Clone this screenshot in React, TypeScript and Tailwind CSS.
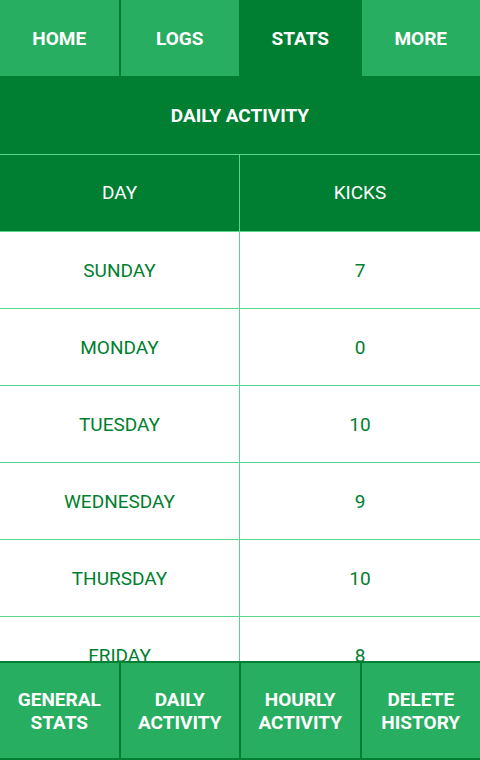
import React from "react";

const font = { fontFamily: "Roboto, 'Noto Sans', sans-serif" };

const tabs = ["HOME", "LOGS", "STATS", "MORE"];
const rows: [string, string][] = [
  ["SUNDAY", "7"],
  ["MONDAY", "0"],
  ["TUESDAY", "10"],
  ["WEDNESDAY", "9"],
  ["THURSDAY", "10"],
  ["FRIDAY", "8"],
  ["SATURDAY", "5"],
];
const actions = [
  ["GENERAL", "STATS"],
  ["DAILY", "ACTIVITY"],
  ["HOURLY", "ACTIVITY"],
  ["DELETE", "HISTORY"],
];

export default function App() {
  return (
    <div className="flex h-[760px] w-[480px] flex-col overflow-hidden bg-white" style={font}>
      {/* top tabs */}
      <div className="flex h-[76px] shrink-0 bg-[#007f32]">
        {tabs.map((t, i) => (
          <div
            key={t}
            className={
              "flex flex-1 items-center justify-center pt-[2px] text-[19px] font-bold text-white " +
              (i > 0 ? "border-l-2 border-[#007f32] " : "") +
              (t === "STATS" ? "bg-[#007f32]" : "bg-[#27ae60]")
            }
          >
            {t}
          </div>
        ))}
      </div>

      <div className="flex h-[79px] shrink-0 items-center justify-center border-b border-[#58d68d] bg-[#007f32] pt-[3px] text-[19px] font-bold text-white">
        DAILY ACTIVITY
      </div>

      <div className="flex-1 overflow-hidden">
        <div className="grid h-[77px] grid-cols-2 border-b border-[#58d68d] bg-[#007f32] text-[19px] text-white">
          <div className="flex items-center justify-center border-r border-[#58d68d] pt-px">DAY</div>
          <div className="flex items-center justify-center pt-px">KICKS</div>
        </div>
        {rows.map(([day, kicks]) => (
          <div key={day} className="grid h-[77px] grid-cols-2 border-b border-[#58d68d] text-[19px] text-[#00802f]">
            <div className="flex items-center justify-center border-r border-[#58d68d] pt-[2px]">{day}</div>
            <div className="flex items-center justify-center pt-[2px]">{kicks}</div>
          </div>
        ))}
      </div>

      {/* bottom actions */}
      <div className="flex h-[99px] shrink-0 border-y-2 border-[#007f32] bg-[#007f32]">
        {actions.map((a, i) => (
          <div
            key={a.join(" ")}
            className={
              "flex flex-1 flex-col items-center justify-center bg-[#27ae60] text-[19px] font-bold leading-[23px] text-white " +
              (i > 0 ? "border-l-2 border-[#007f32]" : "")
            }
          >
            <span>{a[0]}</span>
            <span>{a[1]}</span>
          </div>
        ))}
      </div>
    </div>
  );
}
